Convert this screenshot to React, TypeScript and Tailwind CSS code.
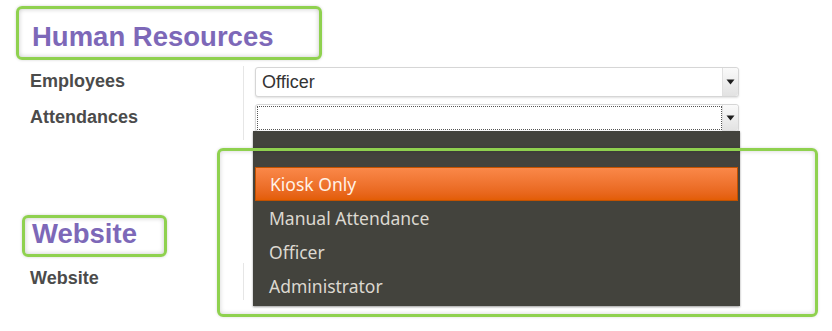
import React from "react";

const options = ["Kiosk Only", "Manual Attendance", "Officer", "Administrator"];

function Arrow() {
  return (
    <div className="flex h-full w-[15px] items-center justify-center rounded-r-[3px] bg-gradient-to-b from-[#fafafa] to-[#e2e2e2] shadow-[-1px_0_0_#e0e0e0]">
      <svg width="9" height="6" viewBox="0 0 9 6">
        <path d="M0.5 0.5 H8.5 L4.5 5.5 Z" fill="#1e1e1e" />
      </svg>
    </div>
  );
}

function SelectBox({ value, focused }: { value?: string; focused?: boolean }) {
  return (
    <div className="flex h-full w-[484px] items-stretch rounded-[3px] border border-[#d6d6d6] bg-white shadow-[0_1px_2px_rgba(0,0,0,0.12)]">
      <div
        className={`flex flex-1 items-center pl-[6px] text-[18px] text-[#333] ${
          focused ? "m-[1px] border border-dotted border-[#555]" : ""
        }`}
      >
        {value}
      </div>
      <Arrow />
    </div>
  );
}

function SectionTitle({ children, className }: { children: React.ReactNode; className: string }) {
  return (
    <div
      className={`rounded-[6px] border-[3px] border-[#8fd14f] text-[27.5px] font-bold leading-[30px] text-[#7d68b8] shadow-[inset_0_0_5px_rgba(0,0,0,0.22),0_0_3px_rgba(0,0,0,0.18)] ${className}`}
    >
      {children}
    </div>
  );
}

export default function App() {
  return (
    <div
      className="relative h-[331px] w-[832px] overflow-hidden bg-white"
      style={{ fontFamily: '"Liberation Sans", Arial, sans-serif' }}
    >
      <div className="pt-[6px]">
        <SectionTitle className="ml-[16px] h-[54px] w-[306px] pl-[13px] pt-[13px]">
          Human Resources
        </SectionTitle>

        <div className="mt-[6px] flex">
          <div className="w-[243px] pl-[30px] text-[18px] font-bold leading-[20px] text-[#4b4b4b]">
            <div className="pt-[5px]">Employees</div>
            <div className="pt-[16px]">Attendances</div>
          </div>
          <div className="h-[74px] w-px bg-[#e6e6e6]" />
          <div className="flex flex-col pl-[11px] pt-[1px]">
            <div className="h-[30px]">
              <SelectBox value="Officer" />
            </div>
            <div className="mt-[7px] h-[28px]">
              <SelectBox focused />
            </div>
          </div>
        </div>

        <SectionTitle className="ml-[22px] mt-[75px] h-[42px] w-[145px] pl-[7px] pt-[1px]">
          Website
        </SectionTitle>

        <div className="mt-[6px] flex">
          <div className="w-[243px] pl-[30px] pt-[5px] text-[18px] font-bold leading-[20px] text-[#4b4b4b]">
            Website
          </div>
          <div className="h-[37px] w-px bg-[#e6e6e6]" />
        </div>
      </div>

      {/* open dropdown list */}
      <div
        className="absolute left-[253px] top-[131px] z-10 flex h-[175px] w-[487px] flex-col bg-[#43433d] pt-[2px] shadow-[0_1px_2px_rgba(0,0,0,0.4)]"
        style={{ fontFamily: '"Noto Sans", "Open Sans", sans-serif' }}
      >
        <div className="h-[34px]" />
        {options.map((o, i) => (
          <div
            key={o}
            className={`mx-[2px] flex h-[34px] items-center pl-[14px] text-[17.5px] ${
              i === 0
                ? "border border-[#c25100] bg-gradient-to-b from-[#fa8848] to-[#e35d04] text-[#fff1e6]"
                : "text-[#dcd8d0]"
            }`}
          >
            {o}
          </div>
        ))}
      </div>

      {/* annotation frame */}
      <div className="pointer-events-none absolute left-[217px] top-[148px] z-20 h-[169px] w-[601px] rounded-[6px] border-[3px] border-[#8fd14f] shadow-[inset_0_0_5px_rgba(0,0,0,0.18),0_0_3px_rgba(0,0,0,0.15)]" />
    </div>
  );
}
